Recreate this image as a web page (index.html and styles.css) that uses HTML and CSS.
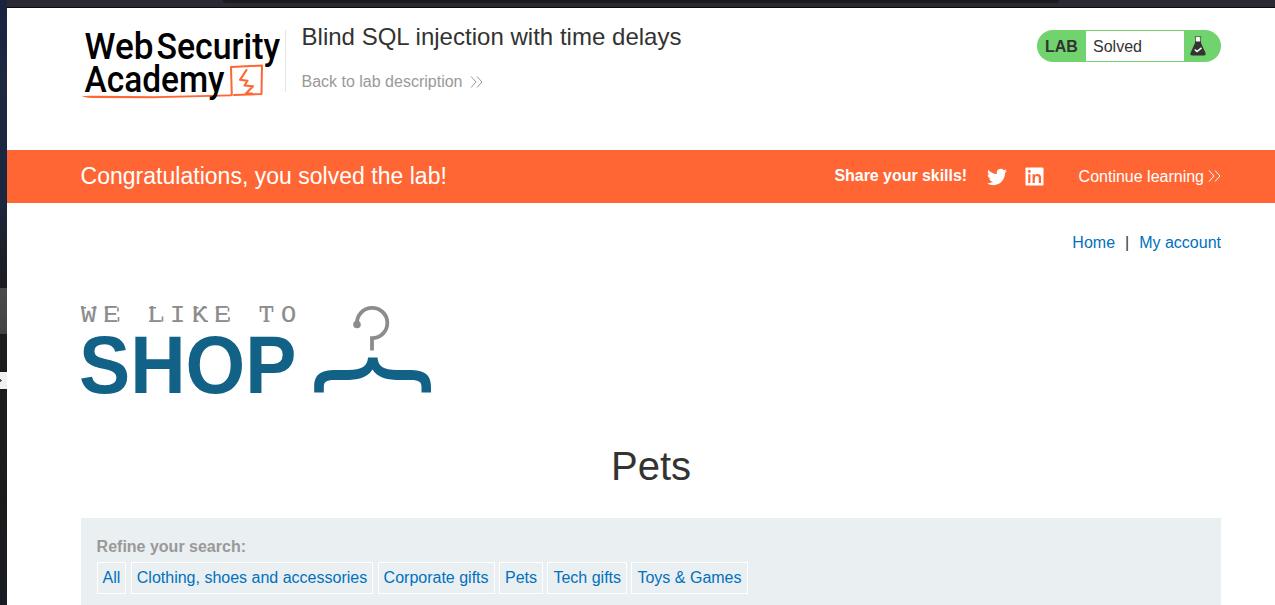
FILE: index.html
```html
<!DOCTYPE html>
<html lang="en">
<head>
<meta charset="utf-8">
<title>Blind SQL injection with time delays</title>
<link rel="stylesheet" href="styles.css">
</head>
<body>
<div class="screen">
  <aside class="desktop-edge">
    <div class="edge-item"></div>
    <div class="edge-handle"><svg width="7" height="17" viewBox="0 0 7 17"><path d="M0 7h1v1h1v1H1v1H0z" fill="#555"/></svg></div>
  </aside>
  <div class="browser">
    <div class="chrome"><div class="address-bar"></div></div>
    <header class="lab-header">
      <svg class="academy-logo" width="204" height="80" viewBox="80 24 204 80">
        <g class="logo-text">
          <text x="84.5" y="58.7" textLength="69" lengthAdjust="spacingAndGlyphs">Web</text>
          <text x="156.5" y="58.7" textLength="123.500" lengthAdjust="spacingAndGlyphs">Security</text>
        </g>
        <path d="M82 96.3Q84 95.5 95 95.8L155 96.3L231 94.6V96.2L150 98.2L92 98Q84 97.6 82 96.3Z" fill="#f63"/>
        <g class="logo-text"><text x="84.5" y="91.5" textLength="140" lengthAdjust="spacingAndGlyphs">Academy</text></g>
        <g fill="none" stroke="#f63" stroke-linejoin="round" stroke-linecap="round">
          <path d="M231.800 95L231 67L262 65.500L261.500 94L234 95" stroke-width="2"/>
          <path d="M246.500 70L240 79.800L247.500 80.800L244.500 85.500L253 86.200L246 93.500H252" stroke-width="2.1"/>
        </g>
      </svg>
      <div class="title-block">
        <h1>Blind SQL injection with time delays</h1>
        <a class="back">Back to lab description <svg width="13" height="12" viewBox="0 0 13 12"><path d="M1 .5L6 6L1 11.500M7 .5L12 6L7 11.500"/></svg></a>
      </div>
      <div class="lab-status">
        <span class="lab-label">LAB</span>
        <span class="lab-value">Solved</span>
        <svg class="flask" width="16" height="20" viewBox="0 0 16 20">
          <path d="M5 5H11V7L15.500 17Q16 19.500 14 19.500H2Q0 19.500 .5 17L5 7Z" fill="#333332"/>
          <path d="M6 1H10V5.500H6Z" fill="#fff"/>
          <path d="M4.500 .6H11.500M5.600 1V6M10.400 1V6" stroke="#555" stroke-width=".8"/>
          <path d="M4.800 13.500L7 15.500L11.500 11.800" fill="none" stroke="#fff" stroke-width="1.500"/>
        </svg>
      </div>
    </header>
    <section class="banner">
      <h2>Congratulations, you solved the lab!</h2>
      <b>Share your skills!</b>
      <svg class="twitter" width="20" height="18" viewBox="0 2 24 20"><path fill="#fff" d="M23.950 4.570a10 10 0 0 1-2.820.780 4.960 4.960 0 0 0 2.160-2.730c-.950.560-2 .960-3.130 1.190a4.920 4.920 0 0 0-8.380 4.480C7.690 8.100 4.070 6.130 1.640 3.160a4.820 4.820 0 0 0-.670 2.480c0 1.710.870 3.210 2.190 4.100a4.900 4.900 0 0 1-2.230-.620v.060a4.920 4.920 0 0 0 3.950 4.830 5 5 0 0 1-2.210.080 4.940 4.940 0 0 0 4.600 3.420A9.870 9.870 0 0 1 0 19.540a13.990 13.990 0 0 0 7.550 2.210c9.050 0 14-7.500 14-13.980 0-.210 0-.420-.020-.630a9.940 9.940 0 0 0 2.460-2.550z"/></svg>
      <svg class="linkedin" width="19" height="19" viewBox="0 0 19 19"><rect x=".5" y=".5" width="18" height="18" rx="1" fill="#fff"/><path fill="#f63" d="M3.200 7.300H5.400V16H3.200ZM7.600 7.300H9.700V8.500Q10.800 7.100 12.800 7.100Q16 7.100 16 10.800V16H13.800V11.300Q13.800 9 12 9Q9.800 9 9.800 11.400V16H7.600Z"/><circle cx="4.300" cy="4.500" r="1.400" fill="#f63"/></svg>
      <a class="continue">Continue learning <svg width="13" height="12" viewBox="0 0 13 12"><path d="M1 .5L6 6L1 11.500M7 .5L12 6L7 11.500"/></svg></a>
    </section>
    <main class="shop">
      <nav class="top-links"><a>Home</a><span>|</span><a>My account</a></nav>
      <svg class="shop-logo" width="352" height="92" viewBox="80 304 352 92">
        <text class="like" transform="translate(81 322) scale(1.1 1)" textLength="195.600">WE LIKE TO</text>
        <path class="serifs" d="M81 307.700H86M91.500 307.700H96.500M104.700 307.700H108M104.700 321.300H108M118 307.500V311.500M118.500 317V321.500M149 307.700H156M149 321.300H153M162.500 316.500V321.500M193.500 307.700H198.500M202 307.700H207M193.500 321.300H198.500M204 321.300H208M215.700 307.700H219M215.700 321.300H219M228.500 307.500V311.500M229 317V321.500M260.500 307.500V312M272.500 307.500V312M263.500 321.300H269.500"/>
        <text class="word" x="79" y="392.700" textLength="217.500" lengthAdjust="spacingAndGlyphs">SHOP</text>
        <path d="M357 324.500A15.200 15.200 0 1 1 372 338.200V350.500" fill="none" stroke="#8c8c8c" stroke-width="3.800"/>
        <circle cx="357" cy="324.500" r="3.800" fill="#8c8c8c"/>
        <path d="M368 357.500H377.500C378 366 383 370 397 370H409C425 370 431 375 431 387V392.500H421.500V387C421.500 382 419 380 411 380H401C387 380 378 378 372.500 369.500C367 378 358 380 344 380H334C326 380 323.800 382 323.800 387V392.500H314.200V387C314.200 375 320 370 336 370H348C362 370 367.500 366 368 357.500Z" fill="#126187"/>
      </svg>
      <h1 class="category">Pets</h1>
      <section class="search">
        <label>Refine your search:</label>
        <div class="filters"><a>All</a><a>Clothing, shoes and accessories</a><a>Corporate gifts</a><a>Pets</a><a>Tech gifts</a><a>Toys &amp; Games</a></div>
      </section>
    </main>
  </div>
</div>
</body>
</html>
```
FILE: styles.css
```css
* { box-sizing: border-box; }
body { margin: 0; font: 16px/20px "Liberation Sans", Arial, sans-serif; color: #333332; background: #fff; }
h1, h2 { margin: 0; font-weight: 400; }
svg { display: block; flex: none; overflow: visible; }
.screen { display: flex; width: 1275px; height: 605px; overflow: hidden; }
.desktop-edge { width: 7px; padding-top: 288px; background: linear-gradient(#19233d, #1b2941 80px, #1c273e 200px, #1c1d20 280px, #1b1b1b 500px, #191c24 605px); }
.edge-item { height: 46px; background: linear-gradient(#4a4a4a, #414344); margin-bottom: 38px; }
.edge-handle { height: 17px; background: #f0f0f0; }
.browser { width: 1268px; }
.chrome { height: 8px; background: #2b2a33; border-bottom: 1px solid #0c0c0d; padding-left: 216px; }
.address-bar { width: 836px; height: 3px; background: #1c1b22; border-radius: 0 0 4px 4px; }
.lab-header { height: 142px; padding: 16px 54px 0 73px; display: flex; align-items: flex-start; }
.logo-text { font: 500 37.5px Roboto, sans-serif; fill: #000; }
.title-block { height: 62px; margin: 6px 0 0 1px; border-left: 1px solid #e4e4e4; padding-left: 15.500px; }
.title-block h1 { font-size: 24px; line-height: 28px; margin-top: -7px; white-space: nowrap; letter-spacing: .02px; }
.back { display: flex; align-items: center; gap: 8px; margin-top: 21px; color: #999; }
.back path, .continue path { fill: none; stroke: currentColor; stroke-width: 1; }
.lab-status { display: flex; align-items: center; width: 184px; height: 32px; margin: 6px 0 0 auto; border-radius: 16px; background: #70d36d; }
.lab-label { width: 49px; padding: 2px 0 0 8px; font-weight: 700; font-size: 16px; }
.lab-value { width: 98px; height: 30px; padding-left: 7px; line-height: 31px; background: #fff; }
.flask { margin-left: 6px; }
.banner { display: flex; align-items: center; height: 53px; padding: 0 54px 0 73.500px; background: #f63; color: #fff; }
.banner h2 { font-size: 23px; line-height: 28px; letter-spacing: .02px; margin: -1px auto 0 0; }
.banner b { margin-top: -2px; letter-spacing: -.04px; }
.twitter { margin-left: 19.500px; }
.linkedin { margin-left: 18px; }
.continue { display: flex; align-items: center; gap: 4px; margin-left: 35px; }
.continue svg { margin-top: -1px; }
.shop { padding: 30px 54px 0 74px; }
.top-links { display: flex; justify-content: flex-end; gap: 10px; }
.top-links a, .filters a { color: #0071bc; }
.shop-logo { margin: 51px 0 0 -1px; }
.like { font: 23px "Liberation Mono", monospace; fill: #8c8c8c; stroke: #8c8c8c; stroke-width: .2px; }
.serifs { fill: none; stroke: #8c8c8c; stroke-width: 1.6px; }
.word { font: 700 81px "Liberation Sans", sans-serif; fill: #126187; }
.category { margin-top: 47px; font-size: 40px; line-height: 46px; text-align: center; }
.search { height: 87px; margin-top: 29px; padding: 19px 16px 0 15.600px; background: #eaeff2; }
.search label { display: block; font-weight: 700; color: #999; }
.filters { display: flex; gap: 4.450px; margin-top: 5px; }
.filters a { height: 32px; padding: 5px; border: 1px solid #fff; white-space: nowrap; }
```
